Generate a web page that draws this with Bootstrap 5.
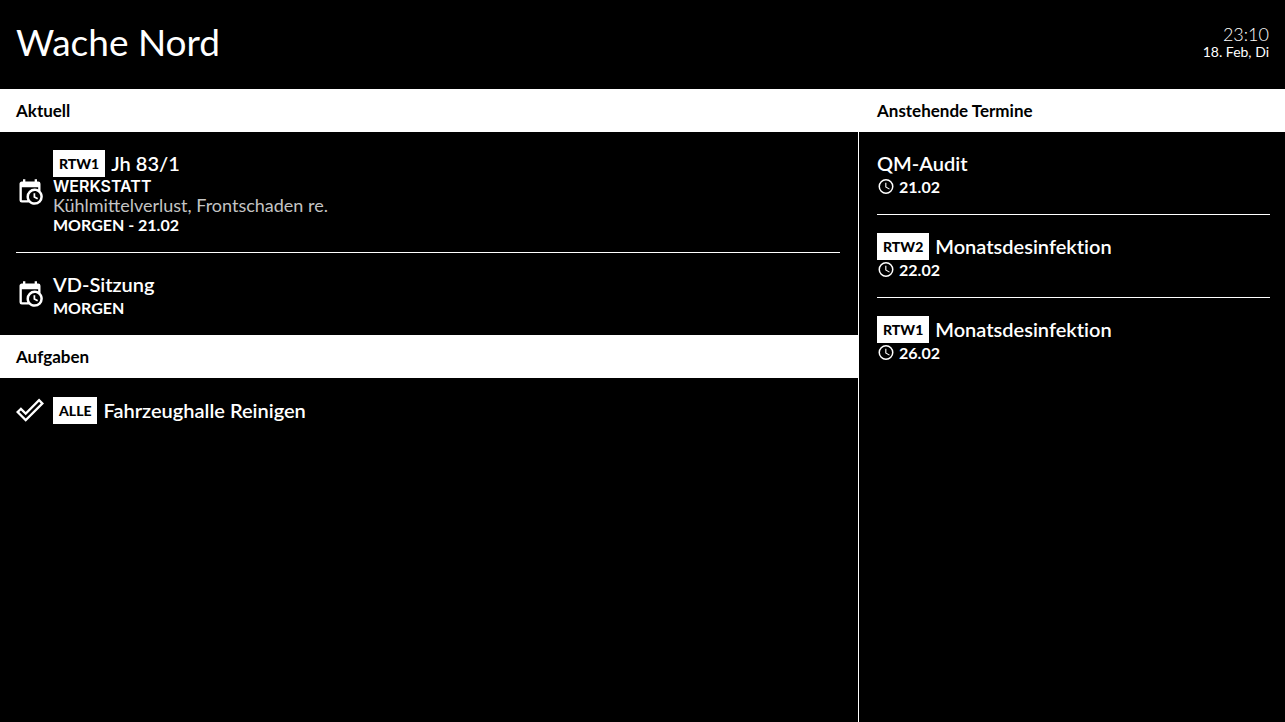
<!DOCTYPE html>
<html lang="de">
<head>
<meta charset="utf-8">
<meta name="viewport" content="width=device-width, initial-scale=1">
<title>Wache Nord</title>
<link href="https://cdn.jsdelivr.net/npm/bootstrap@5.3.0/dist/css/bootstrap.min.css" rel="stylesheet">
<style>
body{font-family:Lato,"Liberation Sans",sans-serif;background:#000;color:#fff}
.top{height:89px;padding:0 16px 5px}
.station{font-size:37px;line-height:48px;font-weight:400}
.time{font-size:18px;line-height:18px;font-weight:300}
.date{font-size:14px;line-height:17px}
.main-col{width:66.85%;border-right:1px solid #fff}
.bar{background:#fff;color:#000;height:43px;line-height:43px;font-size:17px;font-weight:700;padding:0 16px}
.side .bar{padding-left:18px}
.entries{padding:0 18px 0 16px}
.side .entries{padding:0 15px 0 18px}
.entry{padding:18px 0;gap:9px}
.entry + .entry{border-top:1px solid #fff}
.entry-title{font-size:20px;line-height:27px;font-weight:600;gap:6px;font-variant-ligatures:none}
.unit{background:#fff;color:#000;font-size:14px;line-height:27px;font-weight:900;padding:0 6px}
.meta{font-size:16px;line-height:19px;font-weight:700}
.kind{font-family:Inter,"Liberation Sans",sans-serif;font-weight:600}
.note{font-size:18px;line-height:19px;color:#c4c4c4}
svg{fill:currentColor;flex:none}
</style>
</head>
<body class="min-vh-100 d-flex flex-column">
<svg class="d-none" aria-hidden="true">
<symbol id="calendar" viewBox="0 0 24 24"><path d="M15 13h1.5v2.82l2.44 1.41-.75 1.3L15 16.69V13m4-5H5v11h4.67c-.43-.91-.67-1.93-.67-3a7 7 0 0 1 7-7c1.07 0 2.09.24 3 .67V8M5 21a2 2 0 0 1-2-2V5c0-1.11.89-2 2-2h1V1h2v2h8V1h2v2h1a2 2 0 0 1 2 2v6.1c1.24 1.26 2 2.99 2 4.9a7 7 0 0 1-7 7c-1.91 0-3.64-.76-4.9-2H5m11-9.85A4.85 4.85 0 0 0 11.15 16c0 2.68 2.17 4.85 4.85 4.85A4.85 4.85 0 0 0 20.85 16c0-2.68-2.17-4.85-4.85-4.85Z"/></symbol>
<symbol id="check" viewBox="0 0 24 24"><path d="M19.78 2.2 24 6.44 8.33 22.11 0 13.78l4.22-4.23 4.11 4.12L19.78 2.2m0 2.8L8.33 16.5l-4.11-4.12-1.41 1.4 5.52 5.52L21.19 6.44 19.78 5Z"/></symbol>
<symbol id="clock" viewBox="0 0 24 24"><path d="M12 20a8 8 0 0 0 8-8 8 8 0 0 0-8-8 8 8 0 0 0-8 8 8 8 0 0 0 8 8m0-18a10 10 0 0 1 10 10 10 10 0 0 1-10 10A10 10 0 0 1 2 12 10 10 0 0 1 12 2m.5 5v5.25l4.5 2.67-.75 1.23L11 13V7h1.5Z"/></symbol>
</svg>
<header class="top d-flex justify-content-between align-items-center">
<h1 class="station m-0">Wache Nord</h1>
<div class="text-end"><div class="time">23:10</div><div class="date">18. Feb, Di</div></div>
</header>
<main class="d-flex flex-grow-1">
<div class="main-col">
<section>
<h2 class="bar m-0">Aktuell</h2>
<div class="entries">
<article class="entry d-flex align-items-center">
<svg width="28" height="28"><use href="#calendar"/></svg>
<div><h3 class="entry-title d-flex m-0"><span class="unit">RTW1</span>Jh 83/1</h3>
<div class="meta kind">WERKSTATT</div><div class="note">Kühlmittelverlust, Frontschaden re.</div><div class="meta">MORGEN - 21.02</div></div>
</article>
<article class="entry d-flex align-items-center">
<svg width="28" height="28"><use href="#calendar"/></svg>
<div><h3 class="entry-title m-0">VD-Sitzung</h3><div class="meta">MORGEN</div></div>
</article>
</div>
</section>
<section>
<h2 class="bar m-0">Aufgaben</h2>
<div class="entries">
<article class="entry d-flex align-items-center">
<svg width="28" height="28"><use href="#check"/></svg>
<h3 class="entry-title d-flex m-0"><span class="unit">ALLE</span>Fahrzeughalle Reinigen</h3>
</article>
</div>
</section>
</div>
<section class="side flex-grow-1">
<h2 class="bar m-0">Anstehende Termine</h2>
<div class="entries">
<article class="entry"><h3 class="entry-title m-0">QM-Audit</h3>
<div class="meta d-flex gap-1"><svg width="18" height="19"><use href="#clock"/></svg>21.02</div></article>
<article class="entry"><h3 class="entry-title d-flex m-0"><span class="unit">RTW2</span>Monatsdesinfektion</h3>
<div class="meta d-flex gap-1"><svg width="18" height="19"><use href="#clock"/></svg>22.02</div></article>
<article class="entry"><h3 class="entry-title d-flex m-0"><span class="unit">RTW1</span>Monatsdesinfektion</h3>
<div class="meta d-flex gap-1"><svg width="18" height="19"><use href="#clock"/></svg>26.02</div></article>
</div>
</section>
</main>
<script src="https://cdn.jsdelivr.net/npm/bootstrap@5.3.0/dist/js/bootstrap.bundle.min.js"></script>
</body>
</html>
